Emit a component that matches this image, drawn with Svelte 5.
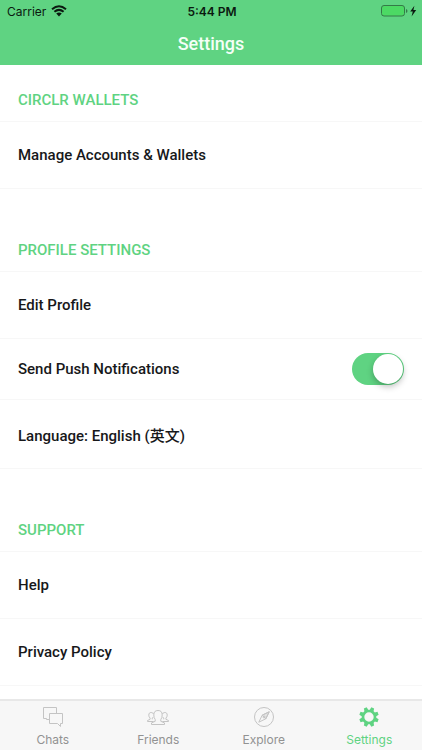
<script>
	let sections = [
		{ title: 'CIRCLR WALLETS', rows: [{ label: 'Manage Accounts & Wallets' }] },
		{
			title: 'PROFILE SETTINGS',
			rows: [
				{ label: 'Edit Profile' },
				{ label: 'Send Push Notifications', toggle: true },
				{ label: 'Language: English (英文)', tall: true }
			]
		},
		{ title: 'SUPPORT', rows: [{ label: 'Help' }, { label: 'Privacy Policy' }] }
	];

	let tabs = ['Chats', 'Friends', 'Explore', 'Settings'];
	let active = 'Settings';
	let push = true;

	const teeth = [0, 45, 90, 135, 180, 225, 270, 315];
</script>

<div class="screen">
	<header>
		<div class="status">
			<div class="carrier">
				<span>Carrier</span>
				<svg width="16" height="12" viewBox="0 0 16 12" aria-hidden="true">
					<path d="M1 4.2Q8-1.8 15 4.2M3.4 6.8Q8 2.9 12.6 6.8" fill="none" stroke="#0b1a10" stroke-width="2" />
					<path d="M5.2 8.5Q8 6.3 10.8 8.5L8 11.5Z" fill="#0b1a10" />
				</svg>
			</div>
			<span class="time">5:44 PM</span>
			<div class="power">
				<svg width="37" height="12" viewBox="0 0 37 12" aria-hidden="true">
					<rect x="1.5" y=".5" width="23" height="10.5" rx="2.5" fill="#4cd964" stroke="#347a48" />
					<path d="M26 4v4q1.5-.6 1.5-2T26 4Z" fill="#347a48" />
					<path d="M34.4 .8L30.2 6.6h2.6L31.6 11.4L36.2 5h-2.8Z" fill="#0b1a10" />
				</svg>
			</div>
		</div>
		<h1>Settings</h1>
	</header>

	<main>
		{#each sections as section}
			<section>
				<h2>{section.title}</h2>
				{#each section.rows as row}
					{#if row.toggle}
						<label class="row switch-row">
							<span>{row.label}</span>
							<input class="switch" type="checkbox" role="switch" bind:checked={push}>
						</label>
					{:else}
						<button class="row" class:tall={row.tall} type="button">{row.label}</button>
					{/if}
				{/each}
			</section>
		{/each}
	</main>

	<nav>
		{#each tabs as tab}
			<button class="tab" class:active={tab === active} type="button" on:click={() => active = tab}>
				<svg width="24" height="24" viewBox="0 0 24 24" fill="none" stroke="currentColor" aria-hidden="true">
					{#if tab === 'Chats'}
						<path d="M8.5 14.5H5.5V13.5H2.5V2.5H15.5V8.5" />
						<path d="M8.5 8.5H21.5V18.5H19.5V21.5L16.5 18.5H8.5Z" />
					{:else if tab === 'Friends'}
						<path d="M5.5 19.5v-1.6l3.7-1.6v-1.8q-1.4-1.8-1.4-4.5c0-3.2 1.5-4.5 4.2-4.5s4.2 1.3 4.2 4.5q0 2.7-1.4 4.5v1.8l3.7 1.6v1.6Z" />
						<path d="M7.6 16.5H1.5v-1l2.6-1.2v-1.2Q2.8 12 2.8 10.2C2.8 8.3 3.6 7.5 5.2 7.5q1.8 0 2.3 1.5M6.3 14.3v-1.2l.9-1M16.4 16.5h6.1v-1l-2.6-1.2v-1.2q1.3-1.1 1.3-2.9c0-1.9-.8-2.7-2.4-2.7q-1.8 0-2.3 1.5M17.7 14.3v-1.2l-.9-1" />
					{:else if tab === 'Explore'}
						<circle cx="12" cy="12" r="9.5" />
						<path d="M17.2 6.8L13.8 13.8L6.8 17.2L10.2 10.2Z" />
						<path d="M10.2 10.2L13.8 13.8L17.2 6.8Z" fill="currentColor" fill-opacity=".35" />
						<circle cx="12" cy="12" r="1" />
					{:else}
						<circle cx="12" cy="12" r="6" stroke-width="2.6" />
						{#each teeth as angle}
							<path d="M9.8 5.9L10.5 2.2H13.5L14.2 5.9Z" fill="currentColor" stroke="none" transform={`rotate(${angle + 22.5} 12 12)`} />
						{/each}
					{/if}
				</svg>
				<span>{tab}</span>
			</button>
		{/each}
	</nav>
</div>

<style>
	:global(body) {
		margin: 0;
		background: #fff;
	}
	.screen {
		display: flex;
		flex-direction: column;
		height: 100vh;
		font-family: Roboto, "Noto Sans CJK SC", sans-serif;
		color: #17181a;
	}
	button {
		border: 0;
		padding: 0;
		background: none;
		font: inherit;
		color: inherit;
		cursor: pointer;
	}

	header {
		flex: none;
		height: 65px;
		background: #5fd382;
	}
	.status {
		display: grid;
		grid-template-columns: 1fr auto 1fr;
		align-items: center;
		height: 22px;
		padding: 0 5px 0 7px;
		font-family: Inter, sans-serif;
		font-size: 12px;
		color: #0b1a10;
	}
	.status svg {
		display: block;
	}
	.carrier {
		display: flex;
		align-items: center;
		gap: 5px;
	}
	.time {
		font-weight: 600;
	}
	.power {
		display: flex;
		justify-content: flex-end;
	}
	h1 {
		margin: 0;
		font-size: 18px;
		font-weight: 500;
		line-height: 43px;
		text-align: center;
		color: #f4fff7;
	}

	main {
		flex: 1;
		min-height: 0;
		overflow-y: auto;
	}
	h2 {
		margin: 0;
		padding: 44px 18px 4px;
		border-bottom: 1px solid #f7f7f7;
		font-size: 15px;
		font-weight: 500;
		line-height: 34px;
		color: #5fd382;
	}
	section:first-child h2 {
		padding-top: 18px;
	}
	.row {
		display: flex;
		align-items: center;
		box-sizing: border-box;
		width: 100%;
		height: 67px;
		padding: 0 18px;
		border-bottom: 1px solid #f7f7f7;
		font-size: 15px;
		font-weight: 500;
		text-align: left;
	}
	.row.tall {
		height: 69px;
	}
	.switch-row {
		justify-content: space-between;
		height: 61px;
		cursor: pointer;
	}
	.switch {
		appearance: none;
		display: flex;
		box-sizing: border-box;
		width: 52px;
		height: 32px;
		margin: 0;
		padding: 1px;
		border-radius: 16px;
		background: #e5e5e5;
		cursor: pointer;
	}
	.switch::before {
		content: "";
		width: 30px;
		height: 30px;
		border-radius: 50%;
		background: #fff;
		box-shadow: 0 3px 6px rgba(0, 0, 0, 0.25);
	}
	.switch:checked {
		justify-content: flex-end;
		background: #5fd382;
	}

	nav {
		display: flex;
		flex: none;
		height: 49px;
		border-top: 2px solid #e8e8e8;
		background: #f7f7f7;
		font-family: Inter, sans-serif;
		font-size: 12px;
	}
	.tab {
		display: flex;
		flex: 1;
		flex-direction: column;
		align-items: center;
		gap: 3px;
		padding-top: 4px;
		line-height: 16px;
		color: #929292;
	}
	.tab svg {
		color: #c4c4c4;
	}
	.tab.active,
	.tab.active svg {
		color: #5fd382;
	}
</style>
